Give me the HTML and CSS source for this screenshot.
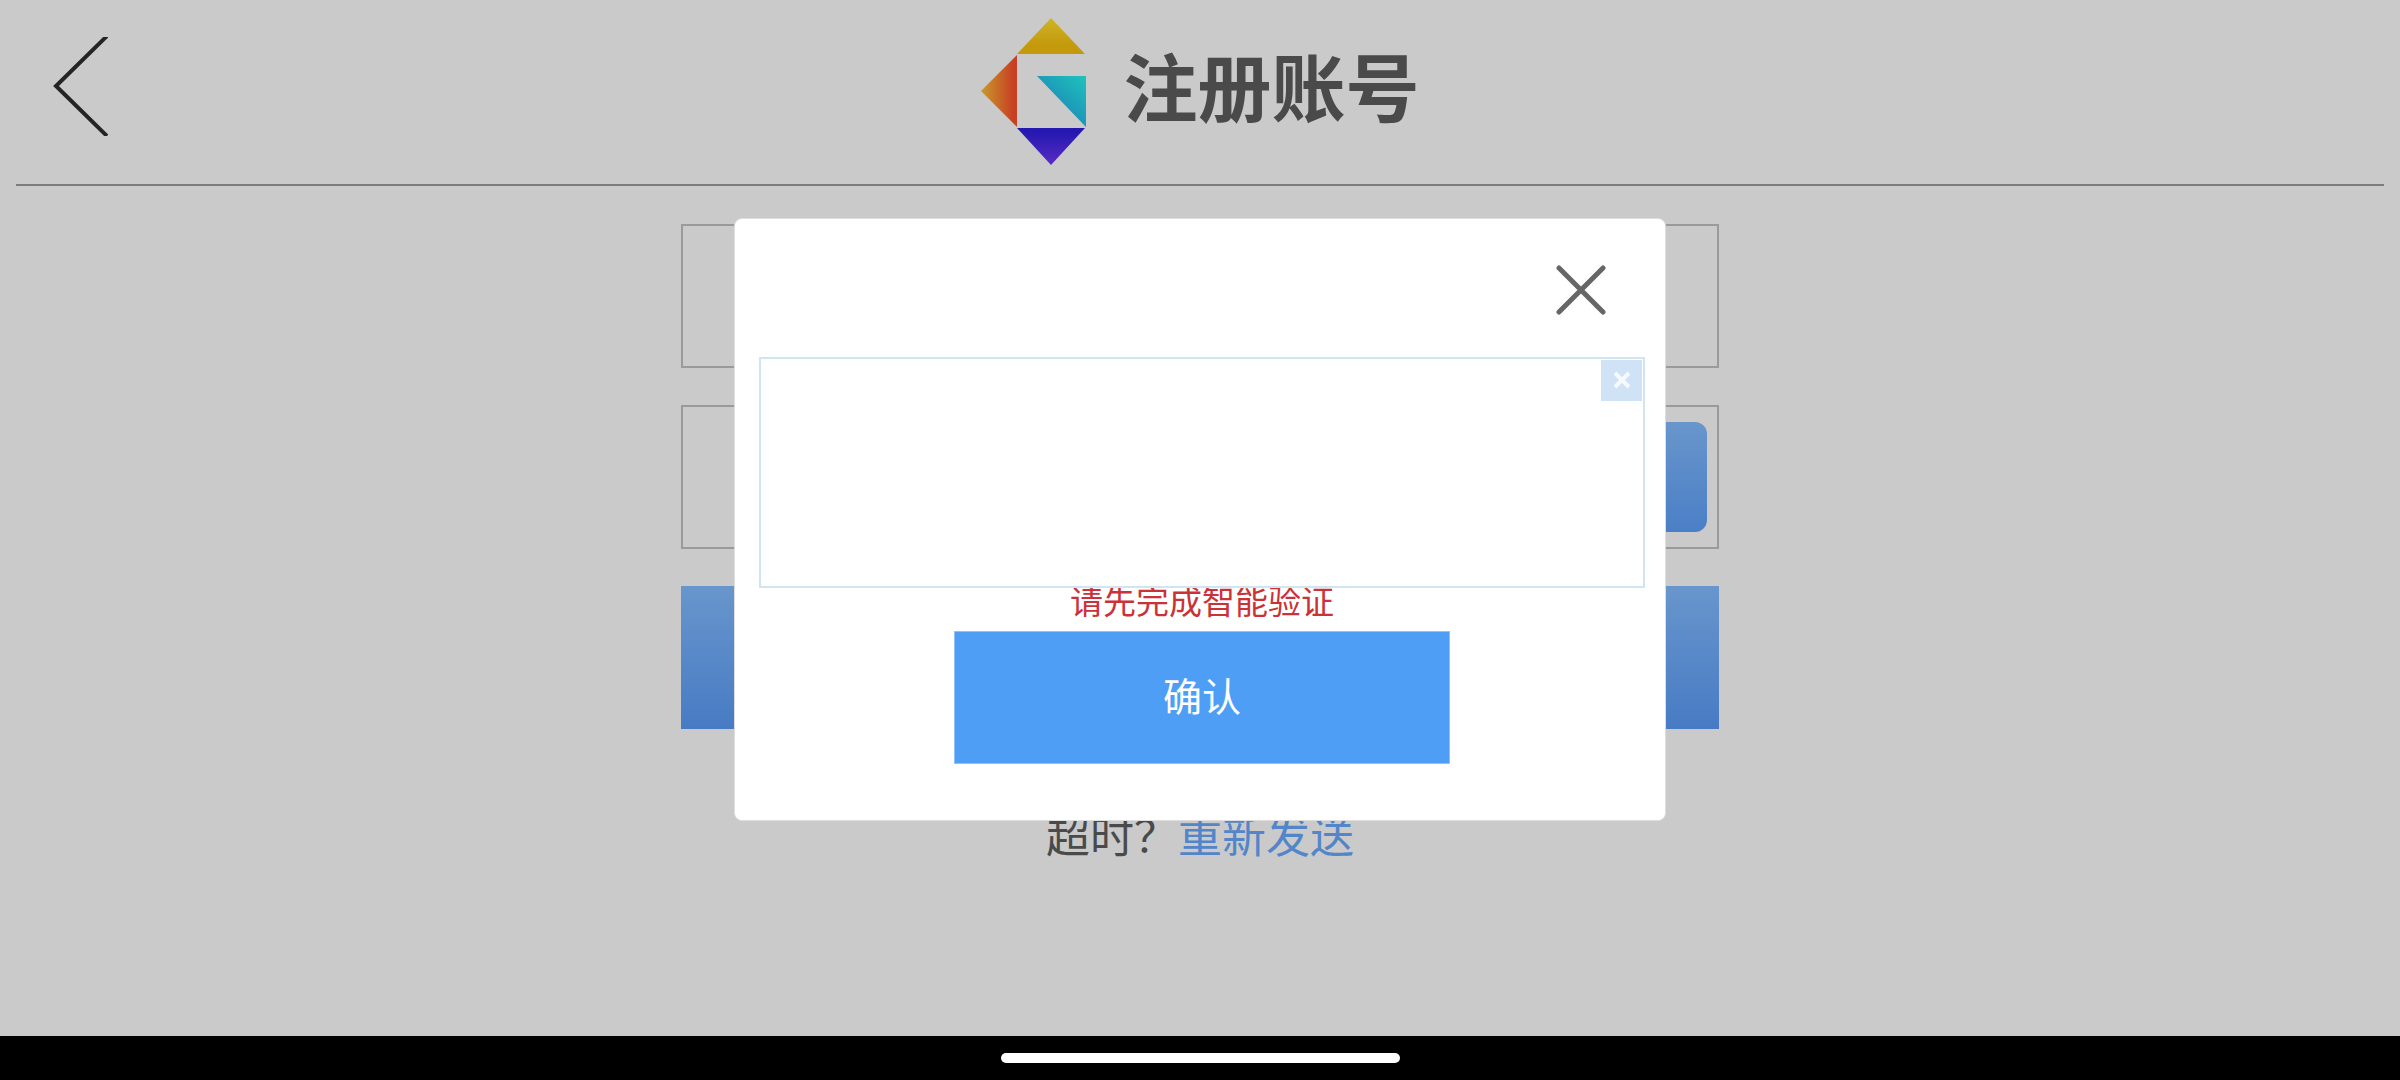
FILE: index.html
```html
<!DOCTYPE html>
<html lang="zh-CN">
<head>
    <meta charset="UTF-8">
    <meta name="viewport" content="width=device-width, initial-scale=1.0">
    <title>注册账号</title>
    <link rel="stylesheet" href="styles.css">
</head>
<body>

    <div class="screen">
        <header class="header">
            <button type="button" class="back" aria-label="返回">
                <svg width="58" height="99" viewBox="0 0 58 99">
                    <path d="M57 -1 L6 49 L57 99" fill="none" stroke="#242424" stroke-width="4"/>
                </svg>
            </button>
            <div class="brand">
                <svg class="logo" width="106" height="148" viewBox="0 0 106 148">
                    <defs>
                        <linearGradient id="amarillo" x1="0" y1="0" x2="0" y2="1">
                            <stop offset="0" stop-color="#cdb526"/>
                            <stop offset="0.75" stop-color="#c49a0c"/>
                        </linearGradient>
                        <linearGradient id="rojo" x1="0" y1="0" x2="1" y2="0">
                            <stop offset="0" stop-color="#c99a2a"/>
                            <stop offset="0.9" stop-color="#c74024"/>
                        </linearGradient>
                        <linearGradient id="celeste" x1="1" y1="0" x2="0.4" y2="0.7">
                            <stop offset="0" stop-color="#1fc4bc"/>
                            <stop offset="1" stop-color="#1c8cb8"/>
                        </linearGradient>
                        <linearGradient id="violeta" x1="0" y1="0" x2="0" y2="1">
                            <stop offset="0.1" stop-color="#2418b0"/>
                            <stop offset="1" stop-color="#5a2cc4"/>
                        </linearGradient>
                    </defs>
                    <polygon points="70,0 104,36 36,36" fill="url(#amarillo)"/>
                    <polygon points="0,73 36,37 36,109" fill="url(#rojo)"/>
                    <polygon points="56,58 105,58 105,109" fill="url(#celeste)"/>
                    <polygon points="36,110 104,110 70,147" fill="url(#violeta)"/>
                </svg>
                <h1>注册账号</h1>
            </div>
        </header>

        <!-- Formulario de registro -->
        <form class="register-form">
            <input type="tel" class="field" name="phone" aria-label="手机号">
            <div class="code-row">
                <input type="text" class="code-input" name="code" aria-label="验证码">
                <button type="button" class="code-button" aria-label="获取验证码"></button>
            </div>
            <button type="submit" class="submit" aria-label="注册"></button>
            <p class="resend">超时？<a href="#">重新发送</a></p>
        </form>

        <!-- Ventana de verificación -->
        <div class="overlay">
            <div class="dialog" role="dialog" aria-label="智能验证">
                <button type="button" class="dialog-close" aria-label="关闭">
                    <svg width="50" height="50" viewBox="0 0 50 50">
                        <path d="M3 3 L47 47 M47 3 L3 47" stroke="#666" stroke-width="5" stroke-linecap="round"/>
                    </svg>
                </button>
                <div class="captcha">
                    <button type="button" class="captcha-close" aria-label="关闭验证">
                        <svg width="18" height="18" viewBox="0 0 18 18">
                            <path d="M2 2 L16 16 M16 2 L2 16" stroke="#f6faff" stroke-width="4"/>
                        </svg>
                    </button>
                </div>
                <p class="error">请先完成智能验证</p>
                <button type="button" class="confirm">确认</button>
            </div>
        </div>
    </div>

    <div class="nav-bar">
        <div class="nav-handle"></div>
    </div>

</body>
</html>
```

FILE: styles.css
```css
/* Estilos generales */
* {
    box-sizing: border-box;
}

body {
    margin: 0;
    min-height: 100vh;
    display: flex;
    flex-direction: column;
    background-color: #000;
    color: #4a4a4a;
    font-family: "Noto Sans CJK SC", sans-serif;
}

button {
    padding: 0;
    border: none;
    background: none;
    font-family: inherit;
    cursor: pointer;
}

svg {
    display: block;
}

.screen {
    position: relative;
    flex: 1;
    background-color: #cacaca;
}

/* Cabecera */
.header {
    display: grid;
    grid-template-columns: 1fr auto 1fr;
    align-items: center;
    height: 186px;
    margin: 0 16px;
    border-bottom: 2px solid #7c7c7c;
}

.back {
    justify-self: start;
    margin: 0 0 12px 34px;
}

.brand {
    display: flex;
    align-items: center;
    gap: 37px;
}

h1 {
    margin: 0 0 16px;
    font-size: 74px;
    line-height: 88px;
    font-weight: bold;
}

/* Formulario */
.register-form {
    display: flex;
    flex-direction: column;
    gap: 37px;
    width: 90%;
    max-width: 1038px;
    margin: 0 auto;
    padding-top: 38px;
}

.field,
.code-row {
    width: 100%;
    height: 144px;
    border: 2px solid #9a9a9a;
    background-color: transparent;
    padding: 0 32px;
    font-size: 44px;
}

.code-row {
    display: flex;
    align-items: center;
    padding: 0 10px 0 32px;
}

.code-input {
    flex: 1;
    min-width: 0;
    border: none;
    background: none;
    font-size: 44px;
}

.code-button {
    width: 260px;
    height: 110px;
    border-radius: 12px;
    background: linear-gradient(#6896cc, #4b7fc6);
}

.submit {
    height: 143px;
    background: linear-gradient(#6896cc, #477bc4);
}

.resend {
    margin: 40px 0 0;
    font-size: 44px;
    line-height: 56px;
    text-align: center;
}

.resend a {
    color: #5386c8;
    text-decoration: none;
}

/* Ventana de verificación */
.overlay {
    position: absolute;
    inset: 0;
    display: flex;
    align-items: center;
    justify-content: center;
    padding-top: 2px;
}

.dialog {
    display: flex;
    flex-direction: column;
    align-items: center;
    width: 90%;
    max-width: 932px;
    padding: 46px 20px 56px 24px;
    border: 1px solid #dedede;
    border-radius: 8px;
    background-color: #fff;
}

.dialog-close {
    align-self: flex-end;
    margin-right: 39px;
}

.captcha {
    display: flex;
    justify-content: flex-end;
    align-items: flex-start;
    width: 100%;
    height: 231px;
    margin-top: 42px;
    padding: 1px;
    border: 2px solid #d1e4f2;
    background-color: #fff;
    z-index: 1;
}

.captcha-close {
    display: flex;
    align-items: center;
    justify-content: center;
    width: 41px;
    height: 41px;
    background-color: #d0e2f6;
}

.error {
    margin: -8px 0 0;
    font-size: 33px;
    line-height: 40px;
    color: #cb3237;
}

.confirm {
    width: 496px;
    max-width: 100%;
    height: 133px;
    margin-top: 11px;
    padding-bottom: 6px;
    border: 1px solid #8fc4fa;
    background-color: #4f9ef6;
    color: #fff;
    font-size: 39px;
}

/* Barra inferior */
.nav-bar {
    display: flex;
    align-items: center;
    justify-content: center;
    height: 44px;
}

.nav-handle {
    width: 399px;
    height: 10px;
    border-radius: 5px;
    background-color: #fff;
}
```
